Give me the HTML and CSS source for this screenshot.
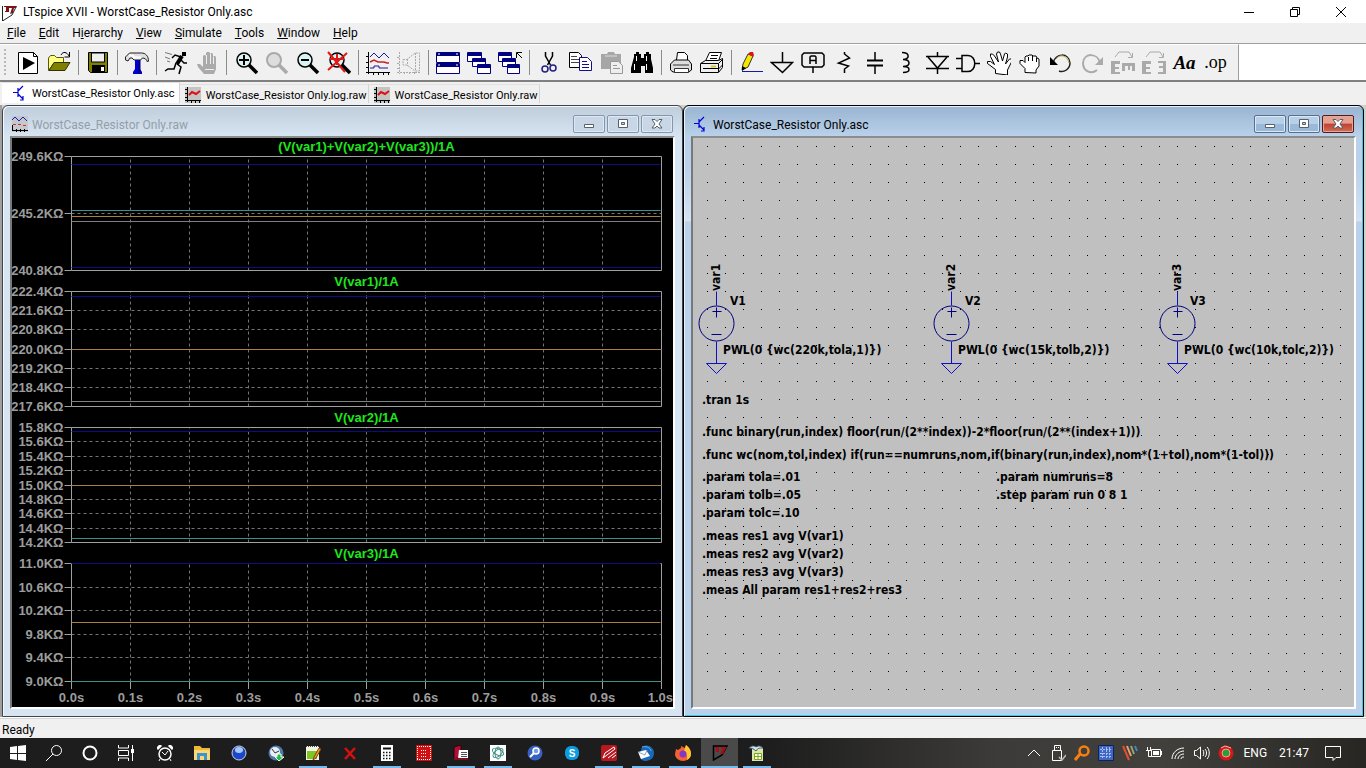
FILE: index.html
```html
<!DOCTYPE html>
<html lang="en">
<head>
    <meta charset="UTF-8">
    <meta name="viewport" content="width=device-width, initial-scale=1.0">
    <title>LTspice XVII - WorstCase_Resistor Only.asc</title>
    <link rel="stylesheet" href="styles.css">
</head>
<body>

<header class="titlebar">
    <svg class="app-icon" viewBox="0 0 18 18"><path d="M2.500 3v15L12 12l4-8" fill="none" stroke="#222"/><path d="M4 3h5v6H5V8h1V4H4zM9 3h8l-1 2h-2l-1 5-3 1 2-6H9z" fill="#7c1218"/></svg>
    <h1>LTspice XVII - WorstCase_Resistor Only.asc</h1>
    <div class="caption">
        <button aria-label="Minimize"><svg viewBox="0 0 12 12"><path d="M1 6.500h10" stroke="#000"/></svg></button>
        <button aria-label="Restore"><svg viewBox="0 0 12 12"><path d="M1.500 3.500h7v7h-7zM3.500 3V1.500h7v7H9" fill="none" stroke="#000"/></svg></button>
        <button aria-label="Close"><svg viewBox="0 0 12 12"><path d="M1 1l10 10M11 1L1 11" stroke="#000"/></svg></button>
    </div>
</header>

<nav class="menu">
    <a href="#"><u>F</u>ile</a>
    <a href="#"><u>E</u>dit</a>
    <a href="#">H<u>i</u>erarchy</a>
    <a href="#"><u>V</u>iew</a>
    <a href="#"><u>S</u>imulate</a>
    <a href="#"><u>T</u>ools</a>
    <a href="#"><u>W</u>indow</a>
    <a href="#"><u>H</u>elp</a>
</nav>

<div class="toolbar-row">
<div class="toolbar">
    <button aria-label="New"><svg viewBox="0 0 24 24"><path d="M2.500 1.500h15l4 4v17h-19z" fill="#fff" stroke="#000"/><path d="M17.500 1.500v4h4" fill="none" stroke="#000"/><path d="M7 6l12 6-12 7z"/></svg></button>
    <button aria-label="Open"><svg viewBox="0 0 24 24"><path d="M1.500 19.500V7l2-2.500h4l2 2h7v5h-9z" fill="#ffff80" stroke="#555520"/><path d="M2 19.500l5-8h16l-5 8z" fill="#808000" stroke="#333300"/><path d="M14 4c2-4 6-3 8 1M22.500 1v5h-5" fill="none" stroke="#000"/></svg></button>
    <span class="sep"></span>
    <button aria-label="Save"><svg viewBox="0 0 24 24"><path d="M2.500 1.500h19v20h-17l-2-2z" fill="#808000" stroke="#000"/><path d="M5.500 2h13v9h-13z" fill="#efefef" stroke="#000"/><path d="M6 14h13v7H6z"/><path d="M15 16h3v4h-3z" fill="#fff"/></svg></button>
    <span class="sep"></span>
    <button aria-label="Control panel"><svg viewBox="0 0 24 24"><path d="M.5 9V6l4-4h12c4 0 7 3 7 8l-1 1c-1-3-3-4-5-4l-2 2H9L7 7H5L3 10z" fill="#e0e0e0" stroke="#222"/><path d="M4 4.500h4l1 2h7" stroke="#fff" fill="none" stroke-width="2"/><path d="M10 9h5v9l2 3v2H8v-2l2-3z" fill="#0000d0"/><path d="M14.500 9v13" stroke="#000080" stroke-width="2"/></svg></button>
    <span class="sep"></span>
    <button aria-label="Run"><svg viewBox="0 0 24 24"><path d="M18 1h4v4h-4z"/><path d="M18 5l-5 8" stroke="#000" stroke-width="4"/><path d="M17 6l-6-2-3 3M17 9l3 3h3M12 12l-2 6H4l-3 2M13 13l4 3-2 7" fill="none" stroke="#000" stroke-width="1.500"/><path d="M1 1.500l7 2M1 6l5 2M3 10l3 1" stroke="#777"/></svg></button>
    <button aria-label="Halt" disabled><svg viewBox="0 0 24 24"><path d="M9 23L3 16l-1-3h3l3 3V5l1-1h1l1 1v6V2l1-1h2l1 1v9V3l1-1h1l1 1v9V6l1-1h1l1 1v12l-2 5z" fill="#aaa"/><path d="M11.500 4v9M15.500 3v10M18.500 6v7M10 18.500h9" stroke="#efefef"/></svg></button>
    <span class="sep"></span>
    <button aria-label="Zoom in"><svg viewBox="0 0 24 24"><circle cx="10" cy="9" r="7" class="lens"/><path d="M10 4v10M5 9h10" stroke="#000" stroke-width="2"/><path d="M15 14l8 8" class="grip"/></svg></button>
    <button aria-label="Pan" disabled><svg viewBox="0 0 24 24"><circle cx="9" cy="9" r="7" fill="#ddd" stroke="#aaa" stroke-width="2"/><path d="M14 14l8 8" stroke="#aaa" stroke-width="3.500"/></svg></button>
    <button aria-label="Zoom out"><svg viewBox="0 0 24 24"><circle cx="9" cy="9" r="7" class="lens"/><path d="M5 9h8" stroke="#000" stroke-width="2"/><path d="M14 14l8 8" class="grip"/></svg></button>
    <button aria-label="Zoom to fit"><svg viewBox="0 0 24 24"><circle cx="10" cy="9" r="7" class="lens"/><path d="M15 14l8 8" class="grip"/><path d="M1 1l17 20M20 2L1 19M10 3v11M3 8h14" stroke="#e01818" stroke-width="2"/></svg></button>
    <span class="sep"></span>
    <button aria-label="Autorange"><svg viewBox="0 0 24 24"><path d="M2.500 1v22M0 21.500h24M0 5.500h3M0 11.500h3M0 16.500h3M7.500 21v3M12.500 21v3M17.500 21v3M22.500 21v3" stroke="#000" fill="none"/><path d="M4 6l4-4 5 5 5-5 5 5M4 17h4v-2h5v2h9" fill="none" stroke="#1818a0"/><path d="M4 11l4-2 4 2h6l3 1h2" fill="none" stroke="#c82020" stroke-width="1.500"/></svg></button>
    <button aria-label="Smith" disabled><svg viewBox="0 0 24 24"><path d="M2.500 1v22M0 21.500h24M0 6.500h3M0 12.500h3M0 17.500h3M7.500 21v3M12.500 21v3M17.500 21v3M6 8.500h4l8-6.500h4.500v18H18l-8-6H6zM18.500 2v18M10.500 8v7" stroke="#aaa" fill="none" stroke-dasharray="2 1"/></svg></button>
    <span class="sep"></span>
    <button aria-label="Tile"><svg viewBox="0 0 24 24"><path d="M.5 1.500h23v10H.5zM.5 12.500h23v10H.5z" fill="#fff" stroke="#000080"/><path d="M1 2h22v3H1zM1 13h22v3H1z" fill="#000080"/><path d="M2 3h2M20 3h2M2 14h2M20 14h2" stroke="#fff"/></svg></button>
    <button aria-label="Cascade"><svg viewBox="0 0 24 24"><g fill="#fff" stroke="#000080"><path d="M.5 1.500h14v9H.5z"/><path d="M5.500 7.500h13v8h-13z"/><path d="M10.500 13.500h13v9h-13z"/></g><path d="M1 2h14v3H1zM6 8h13v3H6zM11 14h12v3H11z" fill="#000080"/></svg></button>
    <button aria-label="Close windows"><svg viewBox="0 0 24 24"><g fill="#fff" stroke="#000080"><path d="M.5 1.500h13v9H.5z"/><path d="M4.500 7.500h13v8h-13z"/><path d="M9.500 13.500h12v9h-12z"/></g><path d="M1 2h13v3H1zM5 8h13v3H5zM10 14h11v3H10z" fill="#000080"/><path d="M24 7l-5-5M18.500 7V1.500H24" fill="none" stroke="#000"/></svg></button>
    <span class="sep"></span>
    <button aria-label="Cut"><svg viewBox="0 0 24 24"><path d="M8.500 1v4l5 9M15.500 1v4l-5 9" fill="none" stroke="#000" stroke-width="1.500"/><circle cx="8" cy="18" r="3" fill="none" stroke="#202080" stroke-width="1.500"/><circle cx="16" cy="17" r="3" fill="none" stroke="#202080" stroke-width="1.500"/></svg></button>
    <button aria-label="Copy"><svg viewBox="0 0 24 24"><path d="M1.500 1.500h9l3 3v12h-12z" fill="#fff" stroke="#000"/><path d="M3 5.500h6M3 8.500h8M3 11.500h8" stroke="#444"/><path d="M11.500 6.500h8l4 4v9h-12z" fill="#fff" stroke="#101080"/><path d="M14 10.500h5M14 13.500h7M14 16.500h7" stroke="#101080"/></svg></button>
    <button aria-label="Paste" disabled><svg viewBox="0 0 24 24"><path d="M2 3h6l1-2h6l1 2h6v15H2z" fill="#a6a6a6"/><path d="M6 5h12" stroke="#ddd"/><path d="M11.500 10.500h8l4 4v8h-12z" fill="#eee" stroke="#999"/><path d="M14 14.500h4M14 17.500h7" stroke="#999"/></svg></button>
    <button aria-label="Find"><svg viewBox="0 0 24 24"><path d="M4 6V3h2V1h3v2h2v4h3V3h2V1h3v2h2v5l2 9v5h-8v-7h-4v7H1v-5z"/><path d="M6.500 5v5M4.500 13v6M16.500 5v5M16.500 13v6" stroke="#fff"/></svg></button>
    <span class="sep"></span>
    <button aria-label="Print"><svg viewBox="0 0 24 24"><path d="M7.500 9l1-7.500h7l3 3V10" fill="#fff" stroke="#000"/><path d="M1.500 13l4-4h14l3 4v6l-3 2H4l-2.500-2z" fill="#ddd" stroke="#000"/><path d="M4 14h16M5.500 17.500h14v4h-14z" fill="#fff" stroke="#333"/></svg></button>
    <button aria-label="Print setup"><svg viewBox="0 0 24 24"><path d="M5.500 10l4-8.500h12l-3 8.500z" fill="#fff" stroke="#000"/><path d="M11 4.500h7M10 7.500h7" stroke="#000"/><path d="M.5 12.500l5-3h13l4-2v9l-4 5H.5z" fill="#efefef" stroke="#000"/><path d="M1 12.500h17.500V21M18.500 12.500l4-4M3 17.500h15M18.500 18l4-4" fill="none" stroke="#000"/><path d="M11 15.500h5" stroke="#d8c818" stroke-width="2"/></svg></button>
    <span class="sep"></span>
    <button aria-label="Wire"><svg viewBox="0 0 24 24"><path d="M3 19l1-6 5-10 5 2-5 11z" fill="#f4e800" stroke="#333"/><path d="M9 3l2-2h3l1 3-1 2z" fill="#d81818"/><path d="M3 15v5l4-3z"/><path d="M3 20.500h21" stroke="#1818a8"/></svg></button>
    <button aria-label="Ground"><svg viewBox="0 0 24 24"><path d="M12.500 1v10M1.500 11.500h21l-10 10z" fill="none" stroke="#000" stroke-width="1.500"/></svg></button>
    <button aria-label="Label net"><svg viewBox="0 0 24 24"><path d="M1 4l2-2h18l2 2v10l-2 2H3l-2-2z" fill="#eee" stroke="#000" stroke-width="1.500"/><path d="M12 16v6M9 13V6l1-1h4l1 1v7M9 9.500h6" fill="none" stroke="#000" stroke-width="1.500"/></svg></button>
    <button aria-label="Resistor"><svg viewBox="0 0 24 24"><path d="M12.500 1v2l5 4-11 5 10 3-4 3v4" fill="none" stroke="#000" stroke-width="1.500"/></svg></button>
    <button aria-label="Capacitor"><svg viewBox="0 0 24 24"><path d="M12 1v8M12 15v8" stroke="#000" stroke-width="1.500"/><path d="M4 9.500h16M4 14.500h16" stroke="#000" stroke-width="2"/></svg></button>
    <button aria-label="Inductor"><svg viewBox="0 0 24 24"><path d="M8 1.500c8 0 8 7 1 7 8 0 8 7 0 7 8 0 8 6 0 6" fill="none" stroke="#000" stroke-width="1.500"/></svg></button>
    <button aria-label="Diode"><svg viewBox="0 0 24 24"><path d="M12.500 1v4M12.500 17v6M1 5.500h23M3 6l9.500 11L22 6M1 17.500h23" fill="none" stroke="#000" stroke-width="1.500"/></svg></button>
    <button aria-label="Component"><svg viewBox="0 0 24 24"><path d="M0 7.500h6M0 17.500h6M19 12.500h5M6 4.500h6c9 0 9 16 0 16H6z" fill="none" stroke="#000" stroke-width="1.500"/></svg></button>
    <button aria-label="Move"><svg viewBox="0 0 24 24"><path d="M8.500 22.500v-4l-8-6v-2h3l4 3-4-8V3h2l2 2 4 6-2-8 1-2h2l1 2 2 7 2-7 1-1 2 1v3l-2 7 4-5h2v3l-4 8v5z" fill="#fff" stroke="#000"/></svg></button>
    <button aria-label="Drag"><svg viewBox="0 0 24 24"><path d="M7 21.500v-4l-5-5v-3h3l2 2V6l1-1h2l1-1h3l1 1h3l1 2 2 1v7l-3 4v3z" fill="#fff" stroke="#000"/><path d="M10.500 6v4M14.500 5v5M18.500 7v4" stroke="#000"/></svg></button>
    <button aria-label="Undo"><svg viewBox="0 0 24 24"><path d="M4 12C6 2 20 1 21 12c0 6-6 10-11 8" fill="none" stroke="#222" stroke-width="1.500"/><path d="M7 8c4-6 12-3 13 4" fill="none" stroke="#b8a848"/><path d="M1 6v8h8z"/></svg></button>
    <button aria-label="Redo" disabled><svg viewBox="0 0 24 24"><path d="M20 12C18 2 4 1 3 12c0 8 8 12 14 7" fill="none" stroke="#aaa" stroke-width="2"/><path d="M23 6v8h-8z" fill="#aaa"/></svg></button>
    <button aria-label="Rotate" disabled><svg viewBox="0 0 24 24"><path d="M4 6l4-5h10l3 5M21.500 2v4.500H17" fill="none" stroke="#aaa"/><path d="M0 10h9v3H4v3h4v2H4v3h5v2H0zM11 12h13v8h-3v-5h-2v4h-2v-4h-3v5h-3z" fill="#aaa"/></svg></button>
    <button aria-label="Mirror" disabled><svg viewBox="0 0 24 24"><path d="M4 6l4-5h10l3 5M21.500 2v4.500H17" fill="none" stroke="#aaa"/><path d="M0 10h9v3H4v3h4v2H4v3h5v2H0zM24 10h-8v2h5v3h-4v2h4v4h-5v2h8z" fill="#aaa"/></svg></button>
    <button class="tool-aa" aria-label="Text">Aa</button>
    <button class="tool-op" aria-label="SPICE directive">.op</button>
</div>
</div>

<nav class="tabs">
    <a class="tab active" href="#"><svg viewBox="0 0 16 16"><path d="M2 7.500h5M7 3v9M7 6l5-5M7 9l5 5M12 11v4H9" class="bjt"/></svg>WorstCase_Resistor Only.asc</a>
    <a class="tab" href="#"><svg viewBox="0 0 16 16"><path d="M0 0h16v16H0z" fill="#c4c4c4"/><path d="M2.500 0v15M0 13.500h16M0 2.500h2M0 6.500h2M0 10.500h2M6.500 13v3M10.500 13v3M14.500 13v3" stroke="#000"/><path d="M4 8l3-3 4 2 4-3" stroke="#e01010" stroke-width="2" fill="none"/></svg>WorstCase_Resistor Only.log.raw</a>
    <a class="tab" href="#"><svg viewBox="0 0 16 16"><path d="M0 0h16v16H0z" fill="#c4c4c4"/><path d="M2.500 0v15M0 13.500h16M0 2.500h2M0 6.500h2M0 10.500h2M6.500 13v3M10.500 13v3M14.500 13v3" stroke="#000"/><path d="M4 8l3-3 4 2 4-3" stroke="#e01010" stroke-width="2" fill="none"/></svg>WorstCase_Resistor Only.raw</a>
</nav>

<main class="workspace">
    <section class="window">
        <header class="window-title">
            <svg viewBox="0 0 16 16"><path d="M0 0h16v16H0z" fill="#c4c8cc"/><path d="M0 4l3-3 4 4 4-4 4 4" fill="none" stroke="#2020b0"/><path d="M1 8.500h3M6 8.500h3M11 9.500h3" stroke="#d03030"/><path d="M.5 9v6M0 14.500h16M4.500 13v3M8.500 13v3M12.500 13v3" stroke="#000"/></svg>
            <h2>WorstCase_Resistor Only.raw</h2>
            <button aria-label="Minimize"><svg viewBox="0 0 14 12"><path d="M2.500 6.500h9v3h-9z" class="glyph"/></svg></button>
            <button aria-label="Maximize"><svg viewBox="0 0 14 12"><path d="M2.500 1.500h9v8h-9zM5.500 4.500h3v2h-3z" class="glyph"/></svg></button>
            <button aria-label="Close"><svg viewBox="0 0 14 12"><path d="M2 1.500h3l2 2 2-2h3L9 6l3 4H9L7 8l-2 2H2l3-4z" class="glyph"/></svg></button>
        </header>
        <div class="window-body"><svg id="plots" class="plots"></svg></div>
    </section>

    <section class="window focused">
        <header class="window-title">
            <svg viewBox="0 0 16 16"><path d="M1 7.500h5M6 3v9M6 6l5-5M6 9l5 5M11 11v4H8" class="bjt"/></svg>
            <h2>WorstCase_Resistor Only.asc</h2>
            <button aria-label="Minimize"><svg viewBox="0 0 14 12"><path d="M2.500 6.500h9v3h-9z" class="glyph"/></svg></button>
            <button aria-label="Maximize"><svg viewBox="0 0 14 12"><path d="M2.500 1.500h9v8h-9zM5.500 4.500h3v2h-3z" class="glyph"/></svg></button>
            <button class="close" aria-label="Close"><svg viewBox="0 0 14 12"><path d="M2 1.500h3l2 2 2-2h3L9 6l3 4H9L7 8l-2 2H2l3-4z" class="glyph"/></svg></button>
        </header>
        <div class="window-body">
            <svg id="schematic" class="schematic">
                <defs>
                    <g id="vsource">
                        <path class="wire" d="M0 -32v14M0 18v22"/>
                        <circle cx="0" cy="0" r="17.500"/>
                        <path d="M-4 -12h9M0 -16v10M-5 11h10"/>
                        <path class="wire" d="M-10 40h20l-10 10z"/>
                    </g>
                </defs>
                <path id="dots" class="dots"/>
                <use href="#vsource" x="23.500" y="185.500"/>
                <use href="#vsource" x="258.500" y="185.500"/>
                <use href="#vsource" x="484.500" y="185.500"/>
                <text transform="translate(27 153) rotate(-90)">var1</text>
                <text transform="translate(262 153) rotate(-90)">var2</text>
                <text transform="translate(488 153) rotate(-90)">var3</text>
                <text x="37" y="167">V1</text>
                <text x="272" y="167">V2</text>
                <text x="497" y="167">V3</text>
                <text x="30" y="216">PWL(0 {wc(220k,tola,1)})</text>
                <text x="265" y="216">PWL(0 {wc(15k,tolb,2)})</text>
                <text x="491" y="216">PWL(0 {wc(10k,tolc,2)})</text>
                <text x="9" y="266">.tran 1s</text>
                <text x="9" y="298">.func binary(run,index) floor(run/(2**index))-2*floor(run/(2**(index+1)))</text>
                <text x="9" y="321">.func wc(nom,tol,index) if(run==numruns,nom,if(binary(run,index),nom*(1+tol),nom*(1-tol)))</text>
                <text x="9" y="343">.param tola=.01</text>
                <text x="9" y="361">.param tolb=.05</text>
                <text x="9" y="379">.param tolc=.10</text>
                <text x="303" y="343">.param numruns=8</text>
                <text x="303" y="361">.step param run 0 8 1</text>
                <text x="9" y="402">.meas res1 avg V(var1)</text>
                <text x="9" y="420">.meas res2 avg V(var2)</text>
                <text x="9" y="438">.meas res3 avg V(var3)</text>
                <text x="9" y="456">.meas All param res1+res2+res3</text>
            </svg>
        </div>
    </section>
</main>

<footer class="status">Ready</footer>

<div class="taskbar">
    <button aria-label="Start"><svg viewBox="0 0 16 16"><path d="M0 2l7-1v7H0zM8 1l8-1v8H8zM0 9h7v6l-7-1zM8 9h8v7l-8-1z" fill="#fff"/></svg></button>
    <button aria-label="Search"><svg viewBox="0 0 16 16"><circle cx="10.500" cy="5.500" r="5" class="line"/><path d="M7 9l-7 7" class="line"/></svg></button>
    <button aria-label="Cortana"><svg viewBox="0 0 16 16"><circle cx="8" cy="8" r="6.500" fill="none" stroke="#fff" stroke-width="2"/></svg></button>
    <button aria-label="Task view"><svg viewBox="0 0 16 16"><path d="M.5 0v3h10V0M.5 16v-3h10v3M.5 5.500h10v5H.5zM14.500 0v16" class="line"/><path d="M13 4h3v4h-3z" fill="#fff"/></svg></button>
    <span class="task-gap"></span>
    <button class="task" aria-label="Alarms"><svg viewBox="0 0 16 16"><circle cx="8" cy="9" r="6" fill="none" stroke="#fff" stroke-width="1.500"/><path d="M0 4l4-4M16 4l-4-4" stroke="#fff" stroke-width="3"/><path d="M5 7l3 3 3-4M3 14l-1 2M13 14l1 2" class="line"/></svg></button>
    <button class="task" aria-label="Explorer"><svg viewBox="0 0 16 16"><path d="M0 1h6l2 2h8v12H0z" fill="#f0b838"/><path d="M0 5h16v10H0z" fill="#fcd875"/><path d="M3 15V8h10v7h-3v-4H6v4z" fill="#3c94d0"/></svg></button>
    <button class="task" aria-label="Signal"><svg viewBox="0 0 16 16"><circle cx="8" cy="8" r="7" fill="#1c48c8" stroke="#c8d0e0"/><ellipse cx="8" cy="5" rx="4" ry="3" fill="#a8c8ff"/></svg></button>
    <button class="task" aria-label="Downloads"><svg viewBox="0 0 16 16"><circle cx="8" cy="8" r="7.500" fill="#5078a8"/><circle cx="7" cy="7" r="5" fill="#e8eef4"/><path d="M4 4l3 4 4-2" fill="none" stroke="#333"/><path d="M9 9h4v3h3l-5 4-4-4h2z" fill="#18c038" stroke="#fff"/></svg></button>
    <button class="task open" aria-label="Notepad"><svg viewBox="0 0 16 16"><path d="M1 1h13v14H1z" fill="#f4f4e8"/><path d="M2 6h10v8H2z" fill="#7cc820"/><path d="M1 1.500h13" stroke="#444" stroke-dasharray="1 1"/><path d="M14 3l-5 9-1 3 3-2 5-9z" fill="#e8a020" stroke="#804010"/></svg></button>
    <button class="task" aria-label="Cross"><svg viewBox="0 0 16 16"><path d="M3 3l10 11M13 3L3 14" stroke="#d81010" stroke-width="2.500"/></svg></button>
    <button class="task open" aria-label="Calculator"><svg viewBox="0 0 16 16"><path d="M2 0h12v16H2z" fill="#fff"/><path d="M4 3.500h8" stroke="#111" stroke-width="2"/><path d="M4 7.500h9M4 10.500h9M4 13.500h9" stroke="#111" stroke-width="1.500" stroke-dasharray="1.500 1.500"/></svg></button>
    <button class="task" aria-label="Matrix"><svg viewBox="0 0 16 16"><path d="M0 0h16v16H0z" fill="#d01010"/><path d="M1 1.500h14M1 14.500h14M1.500 1v14M14.500 1v14M5 5.500h6M5 8.500h6M5 11.500h6" stroke="#fff" stroke-dasharray="1 1"/></svg></button>
    <button class="task open" aria-label="Dictionary"><svg viewBox="0 0 16 16"><path d="M1 2l7-2v12l-7 2z" fill="#b01038" stroke="#300"/><path d="M6 5h9v9H5z" fill="#fff"/><path d="M8 7.500h6M8 9.500h6M8 11.500h6" stroke="#555"/><path d="M1 14h14" stroke="#801020" stroke-width="2"/></svg></button>
    <button class="task open" aria-label="Atoms"><svg viewBox="0 0 16 16"><path d="M0 0h16v16H0z" fill="#fff"/><g fill="none" stroke="#3c8c80"><ellipse cx="8" cy="7" rx="6" ry="3" transform="rotate(25 8 7)"/><ellipse cx="8" cy="8" rx="3" ry="6"/><ellipse cx="8" cy="8" rx="3" ry="6" transform="rotate(50 8 8)"/></g></svg></button>
    <button class="task" aria-label="Finder"><svg viewBox="0 0 16 16"><circle cx="8" cy="8" r="7.500" fill="#3860c0"/><circle cx="9" cy="6" r="3" fill="#7898e0" stroke="#fff" stroke-width="1.500"/><path d="M7 8l-4 4" stroke="#fff" stroke-width="2"/></svg></button>
    <button class="task" aria-label="Skype"><svg viewBox="0 0 16 16"><rect x="1" y="1" width="14" height="14" rx="6" fill="#0c9ce0"/><text x="8" y="12" class="skype">S</text></svg></button>
    <button class="task open" aria-label="PDF editor"><svg viewBox="0 0 16 16"><rect width="16" height="16" rx="2" fill="#b81820"/><path d="M2 13l2-5 9-6 1 2-8 6zM7 13l8-6M11 13l4-3" stroke="#fff" fill="none"/></svg></button>
    <button class="task open" aria-label="Thunderbird"><svg viewBox="0 0 16 16"><path d="M4 2c5-4 12 0 12 6s-5 8-9 8-6-4-5-8z" fill="#1c68b8"/><path d="M0 7l8-2 4 6-9 3z" fill="#fff"/><path d="M0 7l7 3 2-5" fill="none" stroke="#90a8c0"/><path d="M4 2c4-1 8 0 9 4" stroke="#60b0f0" fill="none"/></svg></button>
    <button class="task open" aria-label="Firefox"><svg viewBox="0 0 16 16"><path d="M1 4l2 1 3-2V1l4 2 1-3c4 3 5 6 5 9 0 4-4 7-8 7s-8-3-8-7z" fill="#f86030"/><path d="M11 0c4 3 5 6 5 9 0 3-2 5-4 6 1-5-1-7-3-9z" fill="#ffc430"/><circle cx="8" cy="9" r="3.500" fill="#8038c8"/></svg></button>
    <button class="task current" aria-label="LTspice"><svg viewBox="0 0 16 16"><path d="M1.500 1v14L10 10l5-9z" fill="none" stroke="#000" stroke-width="1.500"/><path d="M2 2h5v5H4V3H2zM8 2h7l-2 3-2 4H8l2-5z" fill="#a01018"/></svg></button>
    <button class="task open" aria-label="Spreadsheet"><svg viewBox="0 0 16 16"><path d="M3 3h11v13H3z" fill="#d8e8a8"/><path d="M0 3c3-3 6-2 7-1 3-2 5-1 7 1-4 0-5 0-7 3-2-2-4-3-7-3z" fill="#d0e4f0" stroke="#405868"/><path d="M5.500 8.500h7v6h-7zM9 8v7M5 11.500h8" fill="#fff" stroke="#7ca818"/></svg></button>
    <div class="tray">
        <svg viewBox="0 0 16 16"><path d="M2 11l6-6 6 6" class="line"/></svg>
        <svg viewBox="0 0 16 16"><path d="M4.500 5V.5h6V5M2.500 5.500h9v10h-9zM6 2.500h1M8 2.500h1" class="line"/><path d="M9 12l3 3 4-5" stroke="#bbb" fill="none" stroke-width="1.500"/></svg>
        <svg viewBox="0 0 16 16"><circle cx="10" cy="6" r="4.500" fill="none" stroke="#f88010" stroke-width="2.500"/><path d="M6 9l-5 6" stroke="#f88010" stroke-width="3"/></svg>
        <svg viewBox="0 0 16 16"><path d="M.5.500h15v15H.5z" fill="#4068c0" stroke="#102060"/><path d="M4.500 2v12M8.500 2v12M11.500 2v12M2 4.500h12M2 8.500h12M2 11.500h12" stroke="#a8c0f8" stroke-dasharray="2 1"/></svg>
        <svg viewBox="0 0 16 16"><path d="M1 1l6 14" stroke="#e05030" stroke-width="2"/><path d="M5 1l4 10" stroke="#f0a078" stroke-width="2"/><path d="M9 1l3 8" stroke="#90a878" stroke-width="2"/><path d="M13 1l2 5" stroke="#4088c0" stroke-width="2"/></svg>
        <svg viewBox="0 0 16 16"><path d="M5.500 4.500h9v7h-9zM15.500 6v4M1.500 2v3M4.500 2v3M0 5.500h5M2.500 6v5.500h3" class="line"/><path d="M7 6h6v4H7z" fill="#fff"/></svg>
        <svg viewBox="0 0 16 16"><path d="M2 14C2 8 7 3 14 3M5 14c0-4 4-8 9-8M8 14c0-3 3-5 6-5M11 14c0-2 2-2 3-2" class="line"/></svg>
        <svg viewBox="0 0 16 16"><path d="M.5 5.500h2l4-3.500v12l-4-3.500h-2zM9 5c1 2 1 4 0 6M11 4c2 2 2 6 0 8M13 2c3 3 3 9 0 12" class="line"/></svg>
        <svg viewBox="0 0 16 16"><circle cx="8" cy="8" r="7.500" fill="#d81818"/><circle cx="8" cy="8" r="4" fill="#28a038" stroke="#f0a0a0"/><path d="M3 3l4-2 6 2" stroke="#ffb0b0" fill="none"/></svg>
        <span class="lang">ENG</span>
        <time>21:47</time>
        <svg class="notes" viewBox="0 0 16 16"><path d="M.5 1.500h15v11H11l-3 3v-3H.5z" class="line"/></svg>
    </div>
</div>

<script src="script.js"></script>
</body>
</html>
```

FILE: styles.css
```css
* {
    box-sizing: border-box;
}
body {
    margin: 0;
    height: 100vh;
    display: flex;
    flex-direction: column;
    overflow: hidden;
    background: #f0f0f0;
    color: #000;
    font-family: Roboto, "Noto Sans", sans-serif;
    font-size: 12px;
}
button {
    padding: 0;
    border: none;
    background: none;
    font: inherit;
    display: flex;
    align-items: center;
    justify-content: center;
}
a {
    color: inherit;
    text-decoration: none;
}
h1, h2 {
    margin: 0;
    font-size: 12px;
    font-weight: normal;
    white-space: nowrap;
}

/* title bar and menu */
.titlebar {
    height: 23px;
    display: flex;
    align-items: center;
    gap: 5px;
    background: #fff;
}
.titlebar h1 {
    flex: 1;
}
.app-icon {
    width: 18px;
    height: 18px;
}
.caption {
    display: flex;
    padding-right: 2px;
}
.caption button {
    width: 46px;
    height: 22px;
}
.caption svg {
    width: 12px;
    height: 12px;
}
.menu {
    height: 20px;
    padding-left: 7px;
    display: flex;
    align-items: center;
    gap: 13px;
}

/* toolbar */
.toolbar-row {
    height: 39px;
    display: flex;
    background: #fff;
    border-top: 1px solid #a0a0a0;
    border-bottom: 2px solid #808080;
}
.toolbar {
    display: flex;
    align-items: center;
    padding: 0 7px 0 7px;
    background: #f0f0f0;
    border-top: 1px solid #fff;
    border-right: 1px solid #a0a0a0;
}
.toolbar::before {
    content: "";
    width: 2px;
    height: 28px;
    margin: 0 6px 0 -3px;
    background: repeating-linear-gradient(#b8b8b8 0 2px, #f0f0f0 2px 4px);
}
.toolbar button {
    width: 31px;
    height: 32px;
}
.toolbar svg {
    width: 24px;
    height: 24px;
}
.sep {
    width: 8px;
    height: 25px;
    background: linear-gradient(#8c8c8c, #8c8c8c) center / 1px 100% no-repeat;
}
.lens {
    fill: #d8f4f4;
    stroke: #000;
    stroke-width: 1.5;
}
.grip {
    stroke: #000;
    stroke-width: 3.5;
}
.toolbar .tool-aa {
    font: italic bold 19px "Liberation Serif", serif;
}
.toolbar .tool-op {
    font: 18px "Liberation Serif", serif;
}

/* document tabs */
.tabs {
    height: 23px;
    padding: 0 0 2px 2px;
    display: flex;
    align-items: flex-end;
    font-size: 11px;
}
.tab {
    height: 19px;
    padding: 2px 1px 0 5px;
    display: flex;
    align-items: center;
    gap: 5px;
    border-top: 1px solid #e0e0e0;
    border-right: 1px solid #d4d4d4;
}
.tab.active {
    height: 21px;
    padding: 0 4px 0 9px;
    background: #fff;
}
.tab svg {
    width: 16px;
    height: 16px;
}
.bjt {
    fill: none;
    stroke: #0000d8;
    stroke-width: 1.2;
}

/* MDI windows */
.workspace {
    flex: 1;
    min-height: 0;
    display: flex;
    padding: 0 2px 0 0;
    border-left: 2px solid #a0a0a0;
    background: #d4d0c8;
}
.window {
    flex: 1;
    min-width: 0;
    padding: 0 7px 7px;
    display: flex;
    flex-direction: column;
    border: 1px solid #40444c;
    border-radius: 6px 6px 0 0;
    background: linear-gradient(#bfcddb, #d7e4f2 30px);
    box-shadow: inset 1px 1px #f4f8fc;
}
.window.focused {
    border-color: #000;
    background: linear-gradient(#99b4d1, #b9d1ea 30px, #b9d1ea 60px, #d4e3f3 115px, #b9d1ea 116px);
    box-shadow: inset 1px 1px #e8f2fc, inset -1px -1px #40c8e8;
}
.window-title {
    height: 30px;
    padding: 6px 2px 0 2px;
    display: flex;
    align-items: center;
    gap: 2px;
    color: #949ea8;
}
.focused .window-title {
    color: #000;
}
.window-title > svg {
    width: 16px;
    height: 16px;
    margin-right: 2px;
}
.window-title h2 {
    flex: 1;
    padding-top: 2px;
}
.window-title button {
    width: 32px;
    height: 18px;
    border: 1px solid #8496ae;
    border-radius: 2px;
    background: #c8d6e6;
    box-shadow: inset 0 0 0 1px #dce8f4;
}
.focused .window-title button {
    border-color: #54708e;
    background: linear-gradient(#b8cfe8 50%, #9ab8d8 50%);
}
.focused .window-title .close {
    border-color: #561818;
    background: linear-gradient(#e4a090 45%, #c04030 50%, #d07058);
    box-shadow: inset 0 0 0 1px #e8a898;
}
.window-title button svg {
    width: 14px;
    height: 12px;
}
.glyph {
    fill: #fff;
    fill-rule: evenodd;
    stroke: #54606e;
}
.window-body {
    flex: 1;
    min-height: 0;
    border: 2px solid;
    border-color: #8c8c8c #fff #fff #787878;
}
.plots, .schematic {
    display: block;
    width: 100%;
    height: 100%;
}

/* waveform panes */
.plots {
    background: #000;
    font: bold 13px "Liberation Sans", sans-serif;
    fill: #9c9c9c;
}
.plots path {
    fill: none;
    stroke: #a0a0a0;
}
.plots .grid {
    stroke: #747474;
    stroke-dasharray: 3 3;
}
.plots .trace-name {
    fill: #1ee61e;
    text-anchor: middle;
}
.plots .value, .plots .last {
    text-anchor: end;
}
.plots .time {
    text-anchor: middle;
}
.plots .blue {
    stroke: #0c0c88;
}
.plots .teal {
    stroke: #349490;
}
.plots .orange {
    stroke: #a88038;
}
.plots .gray {
    stroke: #808080;
}

/* schematic sheet */
.schematic {
    background: #c0c0c0;
    font: bold 12px "DejaVu Sans Condensed", "DejaVu Sans", sans-serif;
}
#vsource {
    fill: none;
    stroke: #000080;
}
#vsource .wire {
    stroke: #1010c0;
}

.status {
    height: 21px;
    padding: 3px 2px 0;
    border-top: 1px solid #fff;
    box-shadow: inset 0 1px #d4d4d4;
    line-height: 18px;
}

/* windows taskbar */
.taskbar {
    height: 30px;
    display: flex;
    background: linear-gradient(90deg, #1d1d1d 56%, #3c3b39 73%, #42403c 85%, #282622);
    color: #fff;
}
.taskbar svg {
    width: 16px;
    height: 16px;
}
.taskbar button {
    width: 36px;
}
.taskbar .task-gap {
    width: 2px;
}
.taskbar .task {
    width: 37px;
}
.open, .current {
    background: linear-gradient(#76b9ed, #76b9ed) center bottom / 28px 2px no-repeat;
}
.current {
    background-color: #4a4a4a;
    background-size: 100% 2px;
}
.line {
    fill: none;
    stroke: #fff;
}
.skype {
    font: bold 10px "Liberation Sans", sans-serif;
    fill: #fff;
    text-anchor: middle;
}
.tray {
    margin-left: auto;
    padding-right: 25px;
    display: flex;
    align-items: center;
    gap: 8px;
}
.tray .lang {
    padding-left: 2px;
}
.tray time {
    padding: 0 8px 0 4px;
}
```

FILE: script.js
```js
const panes = [
    { name: '(V(var1)+V(var2)+V(var3))/1A', top: 18, bottom: 132, min: 240.8, max: 249.6, step: 4.4,
      traces: [['blue', 248.95], ['teal', 245.4], ['orange', 245], ['gray', 244.6], ['blue', 241.05]] },
    { name: 'V(var1)/1A', top: 153, bottom: 268, min: 217.6, max: 222.4, step: 0.8,
      traces: [['blue', 222.2], ['orange', 220], ['gray', 217.8]] },
    { name: 'V(var2)/1A', top: 289, bottom: 404, min: 14.2, max: 15.8, step: 0.2,
      traces: [['blue', 15.75], ['orange', 15], ['teal', 14.25]] },
    { name: 'V(var3)/1A', top: 425, bottom: 543, min: 9, max: 11, step: 0.4,
      traces: [['blue', 11], ['orange', 10], ['teal', 9]] }
];
const sheetHeight = 569;

function path(d, cls) {
    return `<path class="${cls}" d="${d}"/>`;
}

function text(x, y, str, cls) {
    return `<text class="${cls}" x="${x}" y="${y}">${str}</text>`;
}

function drawPlots() {
    const svg = document.getElementById('plots');
    const k = svg.clientHeight / sheetHeight;
    const left = 59.5;
    const right = svg.clientWidth - 12 + 0.5;
    const timeX = i => Math.round(left + (right - left) * i / 10 - 0.5) + 0.5;
    let out = '';

    panes.forEach(p => {
        const top = Math.round(p.top * k) + 0.5;
        const bottom = Math.round(p.bottom * k) + 0.5;
        const valueY = v => Math.round(top + (p.max - v) / (p.max - p.min) * (bottom - top) - 0.5) + 0.5;

        for (let i = 1; i < 10; i++) {
            out += path(`M${timeX(i)} ${bottom}V${top}`, 'grid');
        }
        out += path(`M${left} ${top}H${right}V${bottom}H${left}z`, 'frame');

        const steps = Math.round((p.max - p.min) / p.step);
        for (let i = 0; i <= steps; i++) {
            const v = +(p.max - i * p.step).toFixed(1);
            const y = valueY(v);
            if (i > 0 && i < steps) {
                out += path(`M${left} ${y}H${right}`, 'grid');
            }
            out += path(`M${left - 7} ${y}H${left}`, 'tick');
            out += text(left - 8, y + 4.5, v.toFixed(1) + 'KΩ', 'value');
        }
        p.traces.forEach(t => {
            out += path(`M${left} ${valueY(t[1])}H${right - 1}`, t[0]);
        });
        out += text((left + right) / 2, top - 5.5, p.name, 'trace-name');
    });

    // time axis under the last pane
    const axis = Math.round(panes[3].bottom * k) + 1;
    for (let i = 0; i <= 10; i++) {
        out += path(`M${timeX(i)} ${axis}v7`, 'tick');
        if (i < 10) {
            out += text(timeX(i), axis + 20, (i / 10).toFixed(1) + 's', 'time');
        }
    }
    out += text(svg.clientWidth, axis + 20, '1.0s', 'last');
    svg.innerHTML = out;
}

function drawDots() {
    const svg = document.getElementById('schematic');
    const pitch = 18.09;
    let d = '';
    for (let y = 8; Math.round(y) < svg.clientHeight; y += pitch) {
        for (let x = 14; x < svg.clientWidth; x += pitch) {
            d += `M${Math.round(x)} ${Math.round(y)}h1v1h-1z`;
        }
    }
    document.getElementById('dots').setAttribute('d', d);
}

function draw() {
    drawPlots();
    drawDots();
}

window.addEventListener('resize', draw);
draw();
```
